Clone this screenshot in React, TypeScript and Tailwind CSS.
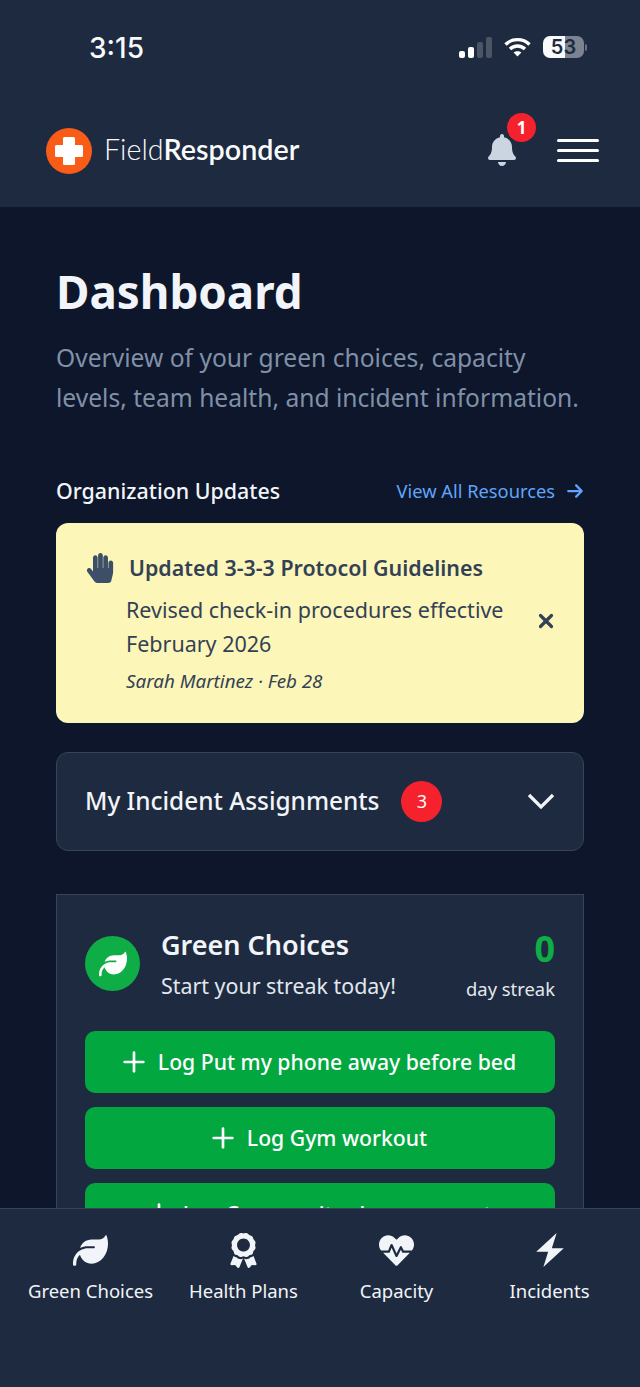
import { Plus, X } from "lucide-react";
import { FaAward, FaBell, FaHandPaper, FaHeartbeat } from "react-icons/fa";
import { FaArrowRight, FaLeaf } from "react-icons/fa6";

const greenChoices = [
    "Log Put my phone away before bed",
    "Log Gym workout",
    "Log Community cleanup event",
];

function StatusBar() {
    return (
        <div className="flex h-[95px] items-start justify-between pl-[89px] pr-[53px] pt-[32px]">
            <span className="font-['Inter',sans-serif] text-[28px] font-medium leading-[32px] text-[#f8fafc]">3:15</span>
            <div className="flex items-center gap-[12px] pt-[4px]">
                <div className="flex h-[21px] items-end gap-[3px]">
                    <span className="h-[7px] w-[6px] rounded-[2px] bg-white" />
                    <span className="h-[11px] w-[6px] rounded-[2px] bg-white" />
                    <span className="h-[16px] w-[6px] rounded-[2px] bg-[#4b5563]" />
                    <span className="h-[21px] w-[6px] rounded-[2px] bg-[#4b5563]" />
                </div>
                <svg width="27" height="20" viewBox="0 0 27 20" fill="none" stroke="white" strokeWidth="3.4">
                    <path d="M1.500 7.500C8 1 19 1 25.500 7.500" />
                    <path d="M6 12C10 8 17 8 21 12" />
                    <path d="M13.500 19.500L9.600 15.600C11.600 13.800 15.400 13.800 17.400 15.600Z" fill="white" stroke="none" />
                </svg>
                <div className="flex items-center gap-[1px]">
                    <div className="flex h-[22px] w-[41px] items-center justify-center rounded-[7px] bg-[linear-gradient(90deg,#f8fafc_54%,#7b8290_54%)] font-['Inter',sans-serif] text-[20px] font-semibold text-[#1e2a3f]">
                        53
                    </div>
                    <span className="h-[7px] w-[2px] rounded-r-full bg-[#6b7280]" />
                </div>
            </div>
        </div>
    );
}

function Header() {
    return (
        <header className="bg-[#1e2a3f]">
            <StatusBar />
            <div className="flex h-[112px] items-start justify-between pl-[46px] pr-[41px] pt-[33px]">
                <div className="flex items-center gap-[12px]">
                    <div className="flex h-[46px] w-[46px] items-center justify-center rounded-full bg-[#f95c17]">
                        <svg width="28" height="28" viewBox="0 0 28 28" fill="white">
                            <path d="M8 1.500A1.500 1.500 0 0 1 9.500 0h9A1.500 1.500 0 0 1 20 1.500V8h6.500A1.500 1.500 0 0 1 28 9.500v9a1.500 1.500 0 0 1-1.500 1.500H20v6.500a1.500 1.500 0 0 1-1.500 1.500h-9A1.500 1.500 0 0 1 8 26.500V20H1.500A1.500 1.500 0 0 1 0 18.500v-9A1.500 1.500 0 0 1 1.500 8H8Z" />
                        </svg>
                    </div>
                    <span className="-mt-[2px] font-['Lato',sans-serif] text-[28.700px] font-light text-[#f8fafc]">
                        Field<span className="font-semibold">Responder</span>
                    </span>
                </div>
                <div className="flex items-start gap-[41px]">
                    <div className="relative mt-[6px] h-[32px] w-[28px]">
                        <FaBell className="h-[32px] w-[28px] text-[#cbd5e1]" />
                        <span className="absolute -right-[20px] -top-[21px] flex h-[29px] w-[29px] items-center justify-center rounded-full bg-[#f5222d] text-[17px] font-bold text-white">
                            1
                        </span>
                    </div>
                    <div className="flex w-[42px] flex-col gap-[7px] pt-[11px]">
                        <span className="h-[3px] rounded-full bg-white" />
                        <span className="h-[3px] rounded-full bg-white" />
                        <span className="h-[3px] rounded-full bg-white" />
                    </div>
                </div>
            </div>
        </header>
    );
}

function Announcement() {
    return (
        <div className="mt-[16px] flex items-center rounded-[12px] bg-[#fdf6b9] pb-[28px] pl-[29px] pr-[27px] pt-[27px]">
            <div className="min-w-0 flex-1">
                <div className="flex items-center gap-[14px]">
                    <FaHandPaper className="h-[30px] w-[30px] text-[#3d4f68]" />
                    <h3 className="text-[21.400px] font-semibold leading-[36px] text-[#334155]">Updated 3-3-3 Protocol Guidelines</h3>
                </div>
                <p className="ml-[41px] mt-[7px] text-[21.500px] leading-[34px] text-[#334155]">
                    Revised check-in procedures effective February 2026
                </p>
                <p className="ml-[41px] mt-[6px] text-[18.800px] italic leading-[28px] text-[#334155]">Sarah Martinez · Feb 28</p>
            </div>
            <X className="mb-[3px] h-[22px] w-[22px] shrink-0 text-[#334155]" strokeWidth={3.500} />
        </div>
    );
}

function GreenChoicesCard() {
    return (
        <section className="mt-[43px] border border-[#364359] bg-[#1e2a3f] px-[28px] pb-[40px] pt-[35px]">
            <div className="flex items-start">
                <div className="mt-[6px] flex h-[55px] w-[55px] items-center justify-center rounded-full bg-[#0ead45]">
                    <FaLeaf className="h-[28px] w-[28px] text-white" />
                </div>
                <div className="-mt-[1px] ml-[21px] flex-1">
                    <h2 className="text-[27px] font-semibold leading-[32px] text-[#f1f5f9]">Green Choices</h2>
                    <p className="mt-[9px] text-[21.400px] leading-[32px] text-[#e2e8f0]">Start your streak today!</p>
                </div>
                <div className="flex flex-col items-end">
                    <span className="-mt-[1px] text-[36px] font-bold leading-[40px] text-[#0ead45]">0</span>
                    <span className="mt-[6px] text-[18.400px] leading-[28px] text-[#e2e8f0]">day streak</span>
                </div>
            </div>
            <div className="mt-[28px] flex flex-col gap-[14px]">
                {greenChoices.map((choice) => (
                    <button
                        key={choice}
                        className="flex h-[62px] items-center justify-center gap-[8px] rounded-[10px] bg-[#03a73f] pr-[6px] text-[21.200px] font-medium text-white"
                    >
                        <Plus className="h-[32px] w-[32px]" strokeWidth={2} />
                        {choice}
                    </button>
                ))}
            </div>
        </section>
    );
}

function BoltIcon() {
    return (
        <svg width="28" height="34" viewBox="0 0 27 33.300" fill="currentColor">
            <path d="M20 0L0 18.300H11.700L7 33.300L27 15H15.300Z" />
        </svg>
    );
}

function BottomNav() {
    const items = [
        { label: "Green Choices", icon: <FaLeaf className="h-[35px] w-[35px]" /> },
        { label: "Health Plans", icon: <FaAward className="h-[35px] w-[27px]" /> },
        { label: "Capacity", icon: <FaHeartbeat className="h-[35px] w-[35px]" /> },
        { label: "Incidents", icon: <BoltIcon /> },
    ];
    return (
        <nav className="grid h-[179px] shrink-0 grid-cols-4 border-t border-[#364359] bg-[#1e2a3f] px-[14px] pt-[23px]">
            {items.map((item) => (
                <div key={item.label} className="flex flex-col items-center text-[#f1f5f9]">
                    <div className="flex h-[36px] items-center justify-center">{item.icon}</div>
                    <span className="mt-[10px] whitespace-nowrap text-[18.500px] leading-[26px]">{item.label}</span>
                </div>
            ))}
        </nav>
    );
}

export default function App() {
    return (
        <div className="flex h-[1387px] flex-col overflow-hidden bg-[#0d162a] font-['Noto_Sans',sans-serif]">
            <Header />
            <main className="min-h-0 flex-1 overflow-hidden px-[56px] pt-[55px]">
                <h1 className="text-[45.700px] font-bold leading-[58px] text-[#f1f5f9]">Dashboard</h1>
                <p className="mt-[18px] text-[24.600px] leading-[40px] text-[#8090a8]">
                    Overview of your green choices, capacity levels, team health, and incident information.
                </p>
                <div className="mt-[57px] flex items-center justify-between">
                    <h2 className="text-[21.400px] font-medium leading-[32px] text-[#f1f5f9]">Organization Updates</h2>
                    <a className="flex items-center gap-[11px] text-[18.300px] leading-[32px] text-[#60a5fa]">
                        View All Resources
                        <FaArrowRight className="h-[18px] w-[18px]" />
                    </a>
                </div>
                <Announcement />
                <div className="mt-[29px] flex h-[99px] items-center justify-between rounded-[12px] border border-[#364359] bg-[#1e2a3f] pl-[28px] pr-[28px]">
                    <div className="flex items-center gap-[22px]">
                        <h2 className="text-[24.400px] font-medium text-[#f1f5f9]">My Incident Assignments</h2>
                        <span className="flex h-[41px] w-[41px] items-center justify-center rounded-full bg-[#f5222d] text-[18px] text-white">3</span>
                    </div>
                    <svg width="28" height="17" viewBox="0 0 28 17" fill="none" stroke="#f1f5f9" strokeWidth="3.200">
                        <path d="M2 2L14 14L26 2" />
                    </svg>
                </div>
                <GreenChoicesCard />
            </main>
            <BottomNav />
        </div>
    );
}
